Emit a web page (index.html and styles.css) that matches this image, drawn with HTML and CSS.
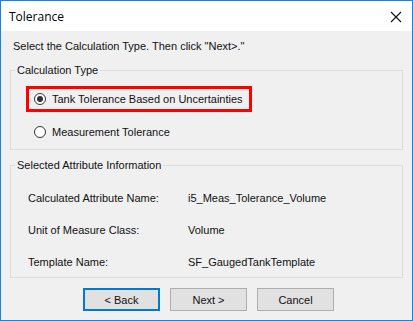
FILE: index.html
```html
<!DOCTYPE html>
<html lang="en">
<head>
  <meta charset="UTF-8" />
  <title>Tolerance</title>
  <link rel="stylesheet" href="styles.css">
</head>
<body>
  <div class="window">
    <div class="titlebar">
      <span class="title">Tolerance</span>
      <svg class="close" width="12" height="12" viewBox="0 0 12 12">
        <path d="M1 1L11 11M11 1L1 11" stroke="#111" stroke-width="1.1" fill="none"/>
      </svg>
    </div>

    <div class="content">
      <div class="intro">Select the Calculation Type. Then click "Next&gt;."</div>

      <fieldset class="group calc">
        <legend>Calculation Type</legend>
        <div class="option highlight">
          <span class="radio checked"></span>
          <span>Tank Tolerance Based on Uncertainties</span>
        </div>
        <div class="option plain">
          <span class="radio"></span>
          <span>Measurement Tolerance</span>
        </div>
      </fieldset>

      <fieldset class="group info">
        <legend>Selected Attribute Information</legend>
        <div class="info-grid">
          <span>Calculated Attribute Name:</span>
          <span>i5_Meas_Tolerance_Volume</span>
          <span>Unit of Measure Class:</span>
          <span>Volume</span>
          <span>Template Name:</span>
          <span>SF_GaugedTankTemplate</span>
        </div>
      </fieldset>

      <div class="buttons">
        <button class="btn focused">&lt; Back</button>
        <button class="btn">Next &gt;</button>
        <button class="btn">Cancel</button>
      </div>
    </div>
  </div>
</body>
</html>
```

FILE: styles.css
```css
body { margin: 0; background: #fff; font-family: "Liberation Sans", Arial, sans-serif; font-size: 11px; color: #111; }

.window {
  width: 413px;
  height: 321px;
  box-sizing: border-box;
  border: 1px solid #1883d7;
  background: #f0f0f0;
  display: flex;
  flex-direction: column;
}

.titlebar {
  height: 30px;
  background: #fff;
  display: flex;
  align-items: center;
  justify-content: space-between;
  padding: 0 10px 0 8px;
}

.title { font-family: "Open Sans", "Noto Sans", sans-serif; font-size: 12px; color: #000; }
.close { margin-top: 1px; }

.content {
  flex: 1;
  padding: 0 9px;
  display: flex;
  flex-direction: column;
}

.intro { margin-top: 9px; line-height: 13px; padding-left: 3px; }

.group {
  margin: 0;
  padding: 0;
  border: 1px solid #dcdcdc;
  min-width: 0;
}

.group legend {
  padding: 0 2px;
  margin-left: 4px;
  line-height: 13px;
}

.calc { margin-top: 11px; padding-bottom: 7px; }

.option {
  display: flex;
  align-items: center;
  gap: 6px;
  height: 20px;
  padding: 0 6px 0 5px;
}

.highlight {
  align-self: flex-start;
  width: fit-content;
  margin: 9px 0 0 15px;
  border: 3px solid #f00;
}

.plain { margin: 10px 0 0 18px; }

.radio {
  width: 12px;
  height: 12px;
  box-sizing: border-box;
  border: 1px solid #333;
  border-radius: 50%;
  background: #fff;
  display: flex;
  align-items: center;
  justify-content: center;
}

.radio.checked::after {
  content: "";
  width: 6px;
  height: 6px;
  border-radius: 50%;
  background: #333;
}

.info { margin-top: 9px; padding-bottom: 8px; }

.info-grid {
  display: grid;
  grid-template-columns: 160px auto;
  row-gap: 19px;
  line-height: 13px;
  padding: 20px 0 0 17px;
}

.buttons {
  display: flex;
  justify-content: center;
  gap: 10px;
  margin: 10px 0 0 4px;
}

.btn {
  width: 77px;
  height: 23px;
  box-sizing: border-box;
  background: #e1e1e1;
  border: 1px solid #adadad;
  font-family: inherit;
  font-size: 11px;
  color: #111;
  padding: 0;
}

.btn.focused { border: 2px solid #0078d7; }
```
